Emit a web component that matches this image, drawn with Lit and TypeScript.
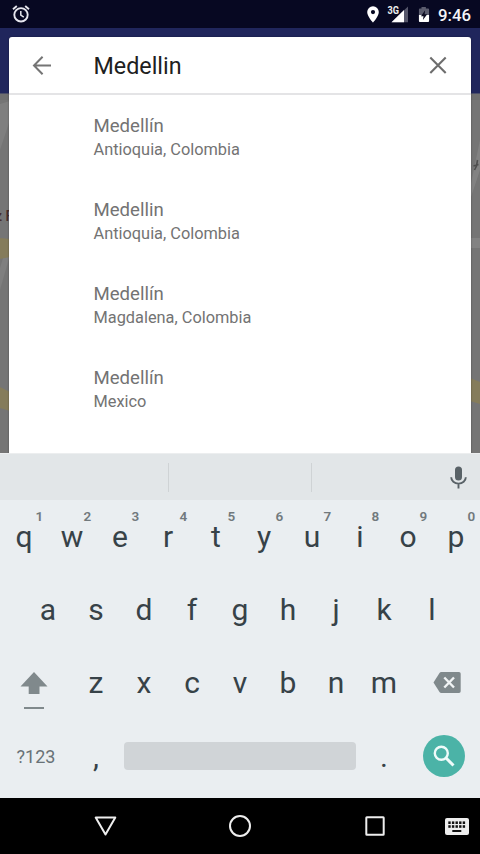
import { LitElement, html, css, svg } from "lit";
import { customElement } from "lit/decorators.js";

const PLACES = [
  ["Medellín", "Antioquia, Colombia"],
  ["Medellin", "Antioquia, Colombia"],
  ["Medellín", "Magdalena, Colombia"],
  ["Medellín", "Mexico"],
];

@customElement("status-bar")
class StatusBar extends LitElement {
  static styles = css`
    :host { display: flex; align-items: center; height: 28px; background: #070822; color: #f4f4f8; font: 500 16.8px Roboto, sans-serif; }
    svg { display: block; flex: none; }
    .alarm { margin-left: 12px; }
    .pin { margin-left: auto; }
    .signal { margin-left: 8px; }
    .battery { margin-left: 10px; }
    .time { margin: 1px 10px 0 8px; width: 32px; white-space: nowrap; }
  `;
  render() {
    return html`
      <svg class="alarm" width="18" height="18" viewBox="0 0 18 18" fill="none" stroke="#e6e6ee">
        <circle cx="9" cy="9.8" r="6.7" stroke-width="1.9" />
        <path d="M1 4.3 4.8 1.1M17 4.3 13.2 1.1" stroke-width="1.9" />
        <path d="M8.8 6v4.2l3 1.9" stroke-width="1.5" />
      </svg>
      <svg class="pin" width="12" height="17" viewBox="0 0 12 17">
        <path fill="#fff" fill-rule="evenodd" d="M6 .3A5.8 5.8 0 0 0 .2 6.1C.2 10.4 6 16.7 6 16.7S11.8 10.4 11.8 6.1A5.8 5.8 0 0 0 6 .3ZM6 4a2.1 2.1 0 1 1 0 4.2A2.1 2.1 0 0 1 6 4Z" />
      </svg>
      <svg class="signal" width="21" height="18" viewBox="0 0 21 18">
        <path d="M4.500 17.200 21 1.500V17.200Z" fill="#55566a" />
        <path d="M4.500 17.200 17 5V17.200Z" fill="#fff" />
        <text x=".5" y="8.800" font-family="Roboto, sans-serif" font-weight="700" font-size="10" textLength="11.500" lengthAdjust="spacingAndGlyphs" fill="#eee" stroke="#070822" stroke-width="1" paint-order="stroke">3G</text>
      </svg>
      <svg class="battery" width="12" height="17" viewBox="0 0 13 17">
        <path d="M3.800 .5h4.700V2H11q1 0 1 1V9H1V3q0-1 1-1h1.800Z" fill="#5b5c6e" />
        <path d="M1 9H12v6.500q0 1-1 1H2q-1 0-1-1Z" fill="#fff" />
        <path d="M7.700 4 3.200 10.300H6L5.300 14.500 10 8.300H7.200Z" fill="#0b0b20" />
      </svg>
      <span class="time">9:46</span>
    `;
  }
}

@customElement("place-search")
class PlaceSearch extends LitElement {
  static styles = css`
    :host { display: flex; flex-direction: column; background: #fff; border-radius: 3px 3px 0 0; font-family: Roboto, sans-serif; box-shadow: 0 0 2px rgba(0, 0, 0, 0.4); }
    .head { display: flex; align-items: center; height: 58px; border-bottom: 2px solid #e4e4e6; box-sizing: border-box; }
    svg { display: block; flex: none; }
    .back { margin-left: 23px; }
    .query { margin-left: 41.500px; flex: 1; font-size: 23.3px; line-height: 28px; color: #202020; padding-top: 1px; }
    .clear { margin-right: 24px; }
    .place { height: 84px; padding: 19.500px 0 0 84.500px; box-sizing: border-box; color: #737373; }
    .name { font-size: 18.600px; line-height: 23px; }
    .region { font-size: 16.350px; line-height: 23px; }
  `;
  render() {
    return html`
      <div class="head">
        <svg class="back" width="20" height="20" viewBox="0 0 20 20" fill="none" stroke="#757575" stroke-width="2">
          <path d="M19 10.500H2.500M10.600 1.800 2 10.500l8.600 8.700" />
        </svg>
        <div class="query">Medellin</div>
        <svg class="clear" width="18" height="18" viewBox="0 0 18 18" fill="none" stroke="#6d6d6d" stroke-width="2.100">
          <path d="M1.300 1.600 16.700 17M16.700 1.600 1.300 17" />
        </svg>
      </div>
      ${PLACES.map(([name, region]) => html`
        <div class="place"><div class="name">${name}</div><div class="region">${region}</div></div>
      `)}
    `;
  }
}

@customElement("soft-keyboard")
class SoftKeyboard extends LitElement {
  static styles = css`
    :host { display: flex; flex-direction: column; height: 344px; background: #eaeef1; color: #374248; font: 30px Roboto, sans-serif; }
    .suggest { display: grid; grid-template-columns: 169px 143px 1fr; height: 46px; background: #e2e6e8; align-items: center; }
    .suggest > div { height: 29px; border-right: 1px solid #cfd3d5; }
    .suggest > svg { justify-self: end; margin-right: 13px; }
    svg { display: block; }
    .row { display: flex; height: 73.2px; justify-content: center; }
    .key { position: relative; width: 48px; display: flex; align-items: center; justify-content: center; }
    .hint { position: absolute; left: 35.500px; top: 8px; font: 600 13.500px/16px Roboto, sans-serif; color: #71797d; }
    .wide { width: 72px; display: flex; align-items: center; justify-content: center; }
    .shift { padding: 16px 4px 0 0; box-sizing: border-box; }
    .delete { padding: 0 0 0 5px; box-sizing: border-box; }
    .sym { font-size: 18px; color: #687277; }
    .space { width: 232px; height: 28px; margin: 22px 4px 0; border-radius: 4px; background: #d0d4d7; }
    .go { width: 42px; height: 42px; border-radius: 50%; background: #4bb3a7; display: flex; align-items: center; justify-content: center; }
  `;
  key(label: string, hint = "") {
    return html`<div class="key">${label}${hint ? html`<span class="hint">${hint}</span>` : ""}</div>`;
  }
  render() {
    return html`
      <div class="suggest">
        <div></div><div></div>
        <svg width="17" height="23" viewBox="0 0 17 23">
          <rect x="5" y="0.500" width="7" height="14" rx="3.500" fill="#596267" />
          <path d="M1.200 11.300a7.300 6.300 0 0 0 14.600 0M8.500 17.500V22.500" fill="none" stroke="#596267" stroke-width="1.900" />
        </svg>
      </div>
      <div class="row">${[..."qwertyuiop"].map((c, i) => this.key(c, String((i + 1) % 10)))}</div>
      <div class="row">${[..."asdfghjkl"].map((c) => this.key(c))}</div>
      <div class="row">
        <div class="wide shift">
          <svg width="28" height="38" viewBox="0 0 28 38" fill="#80898c">
            <path d="M14 0 27.500 14.500H19.500V22H8.700V14.500H.5Z" />
            <rect x="4" y="35" width="20" height="2" />
          </svg>
        </div>
        ${[..."zxcvbnm"].map((c) => this.key(c))}
        <div class="wide delete">
          <svg width="28" height="21" viewBox="0 0 28 21">
            <path d="M8.300 0H26q1.700 0 1.700 1.700V19.300Q27.700 21 26 21H8.300Q7.200 21 6.500 20L.5 10.500 6.500 1Q7.200 0 8.300 0Z" fill="#80898c" />
            <path d="M11.300 5.500 21 15.500M21 5.500 11.300 15.500" stroke="#f1f4f5" stroke-width="2.400" />
          </svg>
        </div>
      </div>
      <div class="row">
        <div class="wide sym">?123</div>
        ${this.key(",")}
        <div class="space"></div>
        ${this.key(".")}
        <div class="wide">
          <div class="go">
            <svg width="22" height="22" viewBox="0 0 22 22" fill="none" stroke="#effbfa">
              <circle cx="8.300" cy="8.300" r="6.500" stroke-width="2.400" />
              <path d="M12.800 12.800 20.500 20.500" stroke-width="3" />
            </svg>
          </div>
        </div>
      </div>
    `;
  }
}

@customElement("nav-bar")
class NavBar extends LitElement {
  static styles = css`
    :host { display: grid; grid-template-columns: 37.500px 135px 135px 135px 37.500px; height: 56px; background: #000; align-items: center; justify-items: center; }
    svg { display: block; }
    .ime { justify-self: end; margin-right: 11px; }
  `;
  render() {
    const dots = [0, 1, 2, 3, 4].map((i) => svg`
      <rect x=${3.3 + i * 3.6} y="3.400" width="2.400" height="2.600" /><rect x=${3.3 + i * 3.6} y="7.200" width="2.400" height="2.600" />`);
    return html`
      <span></span>
      <svg width="23" height="20" viewBox="0 0 23 20" fill="none" stroke="#eee" stroke-width="2" stroke-linejoin="round">
        <path d="M1.700 1.500H21.300L11.500 18.500Z" />
      </svg>
      <svg width="24" height="24" viewBox="0 0 24 24" fill="none" stroke="#eee" stroke-width="2">
        <circle cx="12" cy="12" r="10" />
      </svg>
      <svg width="20" height="20" viewBox="0 0 20 20" fill="none" stroke="#eee" stroke-width="2">
        <rect x="1.300" y="1.300" width="17.400" height="17.400" rx=".5" />
      </svg>
      <svg class="ime" width="24" height="17" viewBox="0 0 24 17">
        <rect width="24" height="17" rx="2" fill="#eee" />
        <g fill="#111">${dots}<rect x="7.300" y="12" width="9" height="2" /></g>
      </svg>
    `;
  }
}

@customElement("app-root")
class AppRoot extends LitElement {
  static styles = css`
    :host { display: flex; flex-direction: column; width: 480px; height: 854px; overflow: hidden; background: #000; }
    .screen { position: relative; height: 426px; overflow: hidden; }
    .map { position: absolute; inset: 0; display: block; }
    place-search { position: relative; margin: 9px 9.500px 0 9px; height: 417px; }
    .screen::after { content: ""; position: absolute; left: 0; right: 0; bottom: 0; height: 1px; background: #eceeef; }
  `;
  render() {
    return html`
      <status-bar></status-bar>
      <div class="screen">
        <svg class="map" width="480" height="426" viewBox="0 28 480 426">
          <rect y="28" width="480" height="426" fill="#757575" />
          <path d="M0 104 10 101V120L0 150ZM0 268 10 235V255L0 290Z" fill="#7f7f7f" />
          <path d="M480 140 470 188V200L480 170ZM470 238h10v10h-10Z" fill="#828282" />
          <path d="M0 238 10 239V257L0 259ZM0 387 10 392V411L0 408ZM470 378 480 382V404L470 401Z" fill="#857c5b" />
          <path d="M473.500 166l5-1.500M477.500 160l-1 6-2 4" stroke="#4d4d4d" stroke-width="1.600" fill="none" />
          <text x="-5" y="221" font-family="Roboto, sans-serif" font-size="14" font-weight="500" fill="#472c2c">z F</text>
          <rect y="94" width="480" height="6" fill="#6a6a6a" opacity=".6" />
          <rect y="28" width="480" height="65.500" fill="#20265c" />
        </svg>
        <place-search></place-search>
      </div>
      <soft-keyboard></soft-keyboard>
      <nav-bar></nav-bar>
    `;
  }
}
